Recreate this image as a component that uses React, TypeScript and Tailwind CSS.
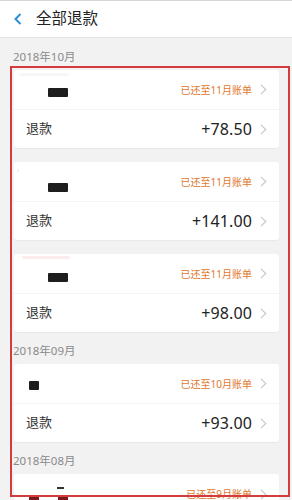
import React from "react";

const Chevron = () => (
  <svg width="7" height="11" viewBox="0 0 7 11" className="shrink-0">
    <path d="M1 0.8 L5.8 5.5 L1 10.2" fill="none" stroke="#c6c6c6" strokeWidth="1.1" />
  </svg>
);

type Item = {
  status: string;
  amount: string;
  block: { left: number; top: number; w: number; h: number };
  faint?: { left: number; top: number; w: number; color: string };
};

const Card = ({ item }: { item: Item }) => (
  <div className="ml-[14px] mr-[13px] bg-white rounded-[3px] shadow-[0_1px_1px_rgba(0,0,0,0.04)]">
    <div className="relative h-[40px] border-b border-[#f3f3f3] flex items-center justify-end pr-[12px]">
      {item.faint && (
        <div
          className="absolute h-[3px] rounded-full"
          style={{ left: item.faint.left, top: item.faint.top, width: item.faint.w, background: item.faint.color }}
        />
      )}
      <div
        className="absolute bg-[#1e1e1e] rounded-[1px]"
        style={{ left: item.block.left, top: item.block.top, width: item.block.w, height: item.block.h }}
      />
      <span className="text-[10px] text-[#e0782e] mr-[8px] leading-none">{item.status}</span>
      <Chevron />
    </div>
    <div className="h-[38px] flex items-center pl-[12px] pr-[12px]">
      <span className="text-[13px] text-[#333]">退款</span>
      <span className="ml-auto text-[16px] text-[#222] mr-[8px] tracking-[0.1px]">{item.amount}</span>
      <Chevron />
    </div>
  </div>
);

const Month = ({ label }: { label: string }) => (
  <div className="h-[32px] pl-[13px] pt-[12px] text-[11.5px] leading-[14px] text-[#8a8a8a]">{label}</div>
);

export default function App() {
  const oct: Item[] = [
    { status: "已还至11月账单", amount: "+78.50", block: { left: 34, top: 18, w: 20, h: 9 }, faint: { left: 6, top: 3, w: 48, color: "#f6f6f6" } },
    { status: "已还至11月账单", amount: "+141.00", block: { left: 34, top: 21, w: 20, h: 9 }, faint: { left: 3, top: 7, w: 2, color: "#efefef" } },
    { status: "已还至11月账单", amount: "+98.00", block: { left: 34, top: 19, w: 20, h: 9 }, faint: { left: 8, top: 2, w: 48, color: "#fcecec" } },
  ];
  const sep: Item[] = [
    { status: "已还至10月账单", amount: "+93.00", block: { left: 15, top: 17, w: 10, h: 9 } },
  ];
  return (
    <div
      className="relative w-[292px] h-[500px] overflow-hidden bg-[#f2f2f2]"
      style={{ fontFamily: '"Noto Sans", "Noto Sans CJK SC", Roboto, sans-serif' }}
    >
      <header className="h-[38px] bg-white border-t border-[#d6d6d6] border-b border-b-[#e4e4e4] flex items-center">
        <svg width="10" height="12" viewBox="0 0 10 12" className="ml-[13px]">
          <path d="M7.5 1 L2.5 6 L7.5 11" fill="none" stroke="#2b8fd6" strokeWidth="2" />
        </svg>
        <span className="ml-[13px] text-[15.5px] text-[#222]">全部退款</span>
      </header>

      <Month label="2018年10月" />
      <div className="flex flex-col gap-[14px]">
        {oct.map((it, i) => (
          <Card key={i} item={it} />
        ))}
      </div>

      <Month label="2018年09月" />
      <div className="flex flex-col gap-[14px]">
        {sep.map((it, i) => (
          <Card key={i} item={it} />
        ))}
      </div>

      <Month label="2018年08月" />
      <div className="ml-[14px] mr-[13px] bg-white rounded-[3px]">
        <div className="relative h-[40px] flex items-center justify-end pr-[12px]">
          <div className="absolute left-[43px] top-[13px] w-[7px] h-[2px] bg-[#333]" />
          <div className="absolute left-[15px] top-[23px] w-[10px] h-[6px] bg-[#7a1a1a]" />
          <div className="absolute left-[44px] top-[23px] w-[10px] h-[6px] bg-[#7a1a1a]" />
          <span className="text-[10px] text-[#e0782e] mr-[8px] leading-none">已还至9月账单</span>
          <Chevron />
        </div>
      </div>

      <div className="absolute left-[10px] top-[66px] w-[280px] h-[431px] border-2 border-[#d23c3c] pointer-events-none" />
    </div>
  );
}
